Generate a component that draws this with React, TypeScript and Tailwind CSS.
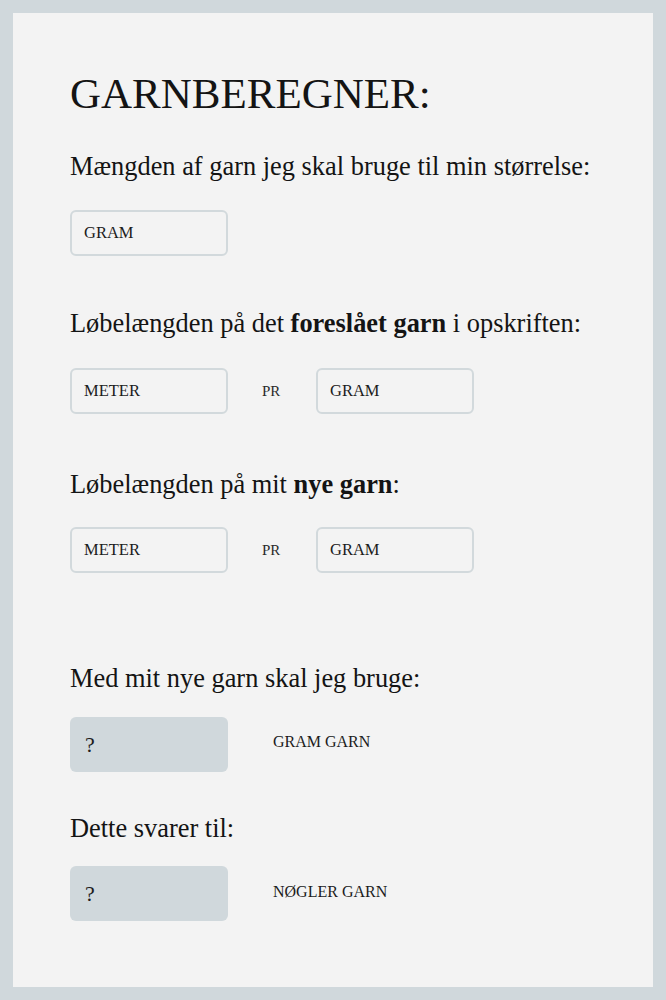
import React from 'react';

const serif = { fontFamily: '"Liberation Serif", "Times New Roman", serif' };

const Field: React.FC<{ placeholder: string }> = ({ placeholder }) => (
  <input
    type="text"
    placeholder={placeholder}
    className="w-[158px] h-[46px] rounded-[6px] border-2 border-[#d2d9dc] bg-transparent pl-3 text-[16.5px] text-[#1c1c1c] placeholder:text-[#1c1c1c] outline-none"
  />
);

const Result: React.FC<{ unit: string }> = ({ unit }) => (
  <div className="flex items-center">
    <div className="w-[158px] h-[55px] rounded-[6px] bg-[#d0d8dc] pl-[15px] flex items-center text-[22px] text-[#1c1c1c]">
      ?
    </div>
    <span className="ml-[45px] mb-[4px] text-[16px] text-[#1c1c1c]">{unit}</span>
  </div>
);

const PerRow: React.FC = () => (
  <div className="flex items-center">
    <Field placeholder="METER" />
    <span className="ml-[34px] mr-[35px] w-[19px] text-[15px] text-[#2a2a2a]">PR</span>
    <Field placeholder="GRAM" />
  </div>
);

export default function App() {
  return (
    <div className="min-h-[1000px] bg-[#d0d8dc] p-[13px]" style={serif}>
      <div className="bg-[#f3f3f3] h-[974px] pl-[57px] pt-[59px] text-[#141414]">
        <h1 className="text-[43px] leading-none font-normal">GARNBEREGNER:</h1>

        <p className="mt-[38px] text-[26.4px] leading-none">
          Mængden af garn jeg skal bruge til min størrelse:
        </p>
        <div className="mt-[31px]">
          <Field placeholder="GRAM" />
        </div>

        <p className="mt-[54px] text-[26.4px] leading-none">
          Løbelængden på det <span className="font-bold">foreslået garn</span> i opskriften:
        </p>
        <div className="mt-[31px]">
          <PerRow />
        </div>

        <p className="mt-[57px] text-[26.4px] leading-none">
          Løbelængden på mit <span className="font-bold">nye garn</span>:
        </p>
        <div className="mt-[30px]">
          <PerRow />
        </div>

        <p className="mt-[92px] text-[26.4px] leading-none">Med mit nye garn skal jeg bruge:</p>
        <div className="mt-[25px]">
          <Result unit="GRAM GARN" />
        </div>

        <p className="mt-[43px] text-[26.4px] leading-none">Dette svarer til:</p>
        <div className="mt-[25px]">
          <Result unit="NØGLER GARN" />
        </div>
      </div>
    </div>
  );
}
